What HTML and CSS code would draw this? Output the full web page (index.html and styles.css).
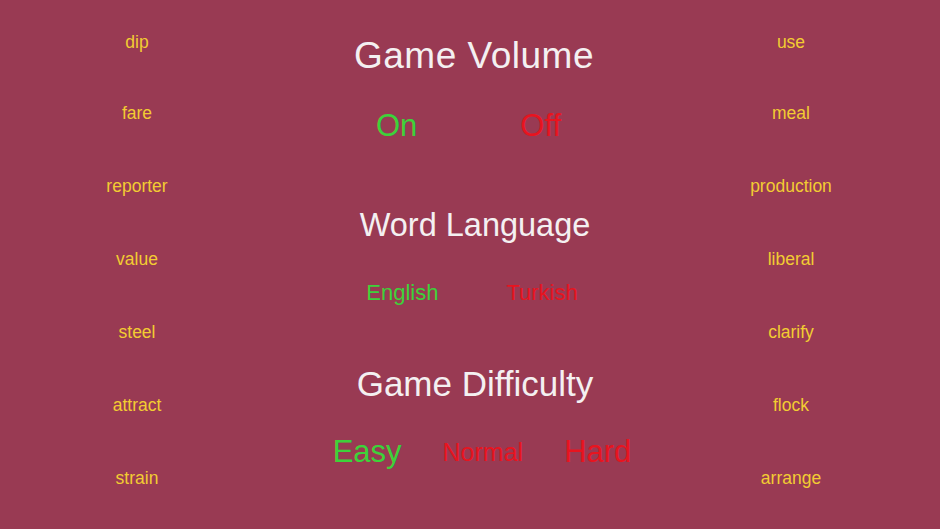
FILE: index.html
```html
<!DOCTYPE html>
<html lang="en">
<head>
<meta charset="utf-8">
<title>Settings</title>
<link rel="stylesheet" href="styles.css">
</head>
<body>
<div class="screen">
  <div class="words words-left">
    <div class="word">dip</div>
    <div class="word">fare</div>
    <div class="word">reporter</div>
    <div class="word">value</div>
    <div class="word">steel</div>
    <div class="word">attract</div>
    <div class="word">strain</div>
  </div>
  <div class="settings">
    <div class="title t1">Game Volume</div>
    <div class="options o1">
      <span class="opt on big">On</span>
      <span class="opt off big">Off</span>
    </div>
    <div class="title t2">Word Language</div>
    <div class="options o2">
      <span class="opt on mid">English</span>
      <span class="opt off mid">Turkish</span>
    </div>
    <div class="title t3">Game Difficulty</div>
    <div class="options o3">
      <span class="opt on big">Easy</span>
      <span class="opt off small">Normal</span>
      <span class="opt off big">Hard</span>
    </div>
  </div>
  <div class="words words-right">
    <div class="word">use</div>
    <div class="word">meal</div>
    <div class="word">production</div>
    <div class="word">liberal</div>
    <div class="word">clarify</div>
    <div class="word">flock</div>
    <div class="word">arrange</div>
  </div>
</div>
</body>
</html>
```
FILE: styles.css
```css
html, body {
  margin: 0;
  padding: 0;
  background: #993a53;
  font-family: "Liberation Sans", Arial, sans-serif;
}
.screen {
  width: 940px;
  height: 529px;
  display: grid;
  grid-template-columns: 274px 402px 230px 34px;
  overflow: hidden;
}
.words {
  display: flex;
  flex-direction: column;
  padding-top: 9px;
}
.word {
  height: 73px;
  line-height: 73px;
  text-align: center;
  font-size: 17.5px;
  color: #f2cc32;
}
.word:first-child {
  height: 67.5px;
  line-height: 67.5px;
}
.settings {
  display: flex;
  flex-direction: column;
  align-items: stretch;
  padding-top: 36px;
}
.title {
  height: 40px;
  line-height: 40px;
  text-align: center;
  color: #f4f0f1;
  font-size: 35px;
}
.t1 { font-size: 37px; letter-spacing: 0.5px; padding-right: 2px; margin-bottom: -1px; }
.t2 { font-size: 32.5px; margin-top: 59px; }
.t3 { margin-top: 51px; }
.options {
  height: 40px;
  line-height: 40px;
  display: flex;
  justify-content: center;
  align-items: center;
}
.o1 { margin-top: 31px; gap: 103px; padding-right: 13px; }
.o2 { margin-top: 28px; gap: 68px; padding-right: 6px; }
.o3 { margin-top: 28px; gap: 41px; padding-left: 14px; }
.opt.big { font-size: 31px; }
.opt.mid { font-size: 22px; }
.opt.small { font-size: 25px; }
.on { color: #3dd23a; }
.off { color: #e8141f; }
```
